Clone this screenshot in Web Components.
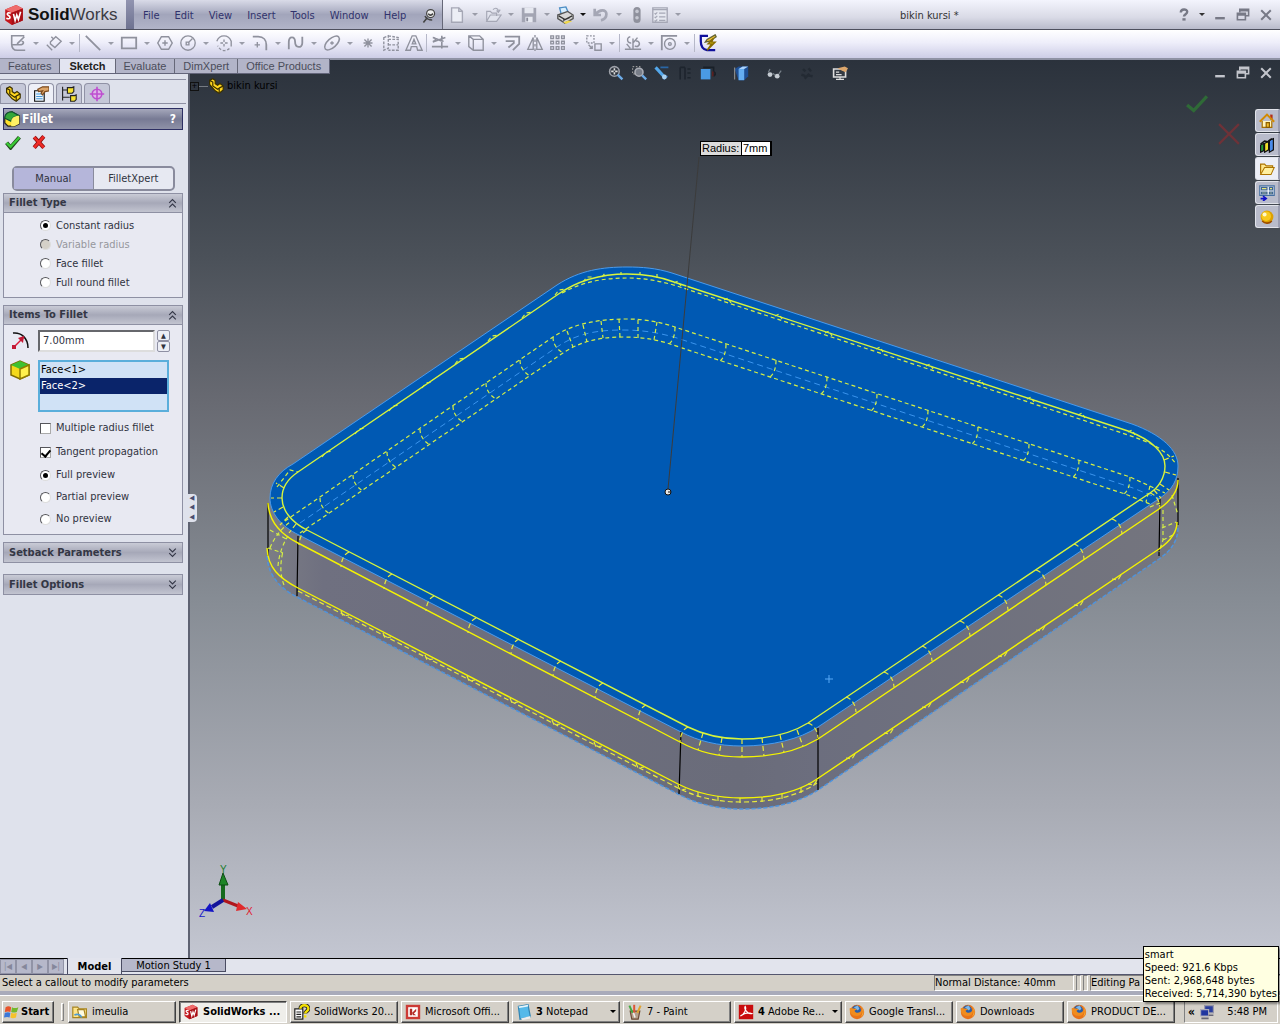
<!DOCTYPE html>
<html lang="en">
<head>
<meta charset="utf-8">
<title>SolidWorks - bikin kursi</title>
<style>
  html, body {
    height: 100%;
    margin: 0;
  }
  body {
    overflow: hidden;
    font: 11px/14px "DejaVu Sans Condensed", "DejaVu Sans", sans-serif;
    color: #000;
  }
</style>
</head>
<body>
<cad-app></cad-app>

<script>
const fox = `<circle cx="10" cy="10" r="9" fill="#e8731a"/><circle cx="9" cy="8" r="6" fill="#2b5fa8"/><path d="M6 4l5-2 2 4-2 2z" fill="#7db8e8"/><path d="M1 5c-1 6 3 10 9 10 4 0 7-3 6-8-1 3-3 4-5 4-2 0-4-1-4-3l3-1c-2-2-5-1-9-2z" fill="#f08c1e"/><path d="M15 3c4 4 4 10 0 13 3-4 3-9 0-13z" fill="#f9c63d"/>`;
const cube = `<path d="M2 5l10-4 6 3v11l-10 4-6-4z" fill="#c4161c"/><path d="M2 5l10-4 6 3-10 4z" fill="#ef6b6b"/><path d="M8 8l10-4v11l-10 4z" fill="#a80f16"/><path d="M7 8.500c-3-1.500-4 1-2 2s2 4-2 2.500M9.500 9l1.500 6 1.500-5 1.500 4 2-7" fill="none" stroke="#fff" stroke-width="1.500"/>`;
const part = `<path d="M2 3l4-2 3 2v4l3 2 3-2 4 3v5l-5 4-5-3-7-8z" fill="#ffd61f" stroke="#3b3000"/><path d="M2 3l4 2v5l6 4 3-2 4-2M14 13v5" fill="none" stroke="#3b3000"/>`;
const restore = `<path d="M6 7V3h11v8h-4M6 4.500h11" fill="none" stroke="currentColor" stroke-width="2"/><path d="M3 8h10v8H3zM3 10h10" fill="none" stroke="currentColor" stroke-width="2"/>`;

// every glyph is drawn on a 20 x 20 grid
const ICONS = {
  cube, part, restore, fox,
  pin: `<circle cx="12" cy="7" r="5" fill="#eee" stroke="#444" stroke-width="1.500"/><path d="M9 7c2 3 4 2 6 0M3 18l5-6M5 10c2 4 5 5 9 5" fill="none" stroke="#444" stroke-width="2"/>`,
  'new': `<path d="M4 2h8l4 4v12H4z" fill="#eceef5" stroke="#a5a7b5"/><path d="M12 2v4h4" fill="none" stroke="#a5a7b5"/>`,
  open: `<path d="M3 17V6h4l2 2h5v3M3 17l4-7h12l-5 7zM10 4c3-3 6-1 6 2m-2-1l2 2 2-3" fill="#e2e4ee" stroke="#a5a7b5" stroke-width="1.300"/>`,
  save: `<path d="M2 2h16v16H2z" fill="#a3a5b3"/><path d="M5 2h10v6H5zM6 12h8v6H6z" fill="#e6e8f0"/><path d="M7 13h2v4H7z" fill="#888a98"/>`,
  print: `<path d="M4 2l7-1 3 7-8 2z" fill="#d8efff" stroke="#4a8cc4"/><path d="M2 10l11-4 6 4v4l-9 5-8-5z" fill="#d8d8d8" stroke="#555"/><path d="M3 11l7 4 8-4M8 16l7-3" fill="none" stroke="#333" stroke-width="1.500"/><path d="M8 18l6-2 4 1-7 3z" fill="#f0d84c"/>`,
  undo: `<path d="M3 3v7h7M4 9c4-5 12-6 12 0 0 3-2 6-6 7" fill="none" stroke="#a5a7b5" stroke-width="3"/>`,
  traffic: `<rect x="6" y="1" width="8" height="18" rx="4" fill="#8f919d"/><circle cx="10" cy="6" r="2" fill="#c6c8d2"/><circle cx="10" cy="13" r="2" fill="#c6c8d2"/>`,
  options: `<path d="M2 2h16v16H2z" fill="#e6e8f0" stroke="#a5a7b5"/><path d="M2 4h16M4 8l1 1 2-2M9 8h7M4 12l1 1 2-2M9 12h7M4 16l1 1 2-2M9 16h7" fill="none" stroke="#a5a7b5" stroke-width="1.300"/>`,
  help: `<path d="M6 7c0-5 8-5 8-1 0 3-4 3-4 6" fill="none" stroke="currentColor" stroke-width="3"/><rect x="8" y="14" width="4" height="3" fill="currentColor"/>`,
  min: `<path d="M4 14h12" stroke="currentColor" stroke-width="3"/>`,
  close: `<path d="M4 4l12 12M16 4L4 16" stroke="currentColor" stroke-width="2.500"/>`,
  sketch: `<path d="M17 2H3v9c0 5 2 7 6 7h9M9 11l8-8M4 12h8c5 0 5-4 2-4" stroke-width="1.800"/>`,
  dimension: `<path d="M6 9l6-6 6 5-7 7-5-4zM2 12l6 6M9 5l-2-2"/>`,
  line: `<path d="M2 2l16 16" stroke-width="2"/>`,
  rect: `<path d="M2 4h16v12H2z" stroke-width="2"/>`,
  polygon: `<path d="M6 3h8l4 7-4 7H6l-4-7zM10 7v6M7 10h6" stroke-width="1.600"/>`,
  circle: `<circle cx="10" cy="10" r="8"/><path d="M10 10l5-5M8 9h3v3H8z"/>`,
  arc: `<path d="M2 8c3-8 13-8 16 0v6"/><path d="M16 16c-4 4-10 3-13-3M10 6v8M6 10h8" stroke-dasharray="3 2"/>`,
  fillet: `<path d="M2 3h6c6 0 9 4 9 9v6" stroke-width="2"/><path d="M7 9v6M4 12h6"/>`,
  spline: `<path d="M2 17V9c0-7 7-7 7 0s8 7 8 1V3" stroke-width="2"/>`,
  ellipse: `<ellipse cx="10" cy="10" rx="10" ry="5" transform="rotate(-42 10 10)" stroke-width="1.700"/><path d="M8 10h4M10 8v4"/>`,
  point: `<path d="M10 5v10M5 10h10M6 6l8 8M14 6l-8 8"/>`,
  grid: `<path d="M2 4l5-2v14l-5 2zM7 6h11v12H7M7 12h11M7 2l11 2v2" stroke-dasharray="3 1.500"/>`,
  letter: `<path d="M1 18L8 2h4l7 16h-5l-1-4H7l-1 4zM8 11l2-5 2 5z"/>`,
  trim: `<path d="M2 4c4 0 4 4 0 4M2 4c3 0 7 4 12 4M2 9l14-5M12 2v14M1 14h18" stroke-width="1.800"/>`,
  convert: `<path d="M2 2h12l4 4v12H7l-5-4zM7 6h11M7 6v12M2 2l5 4" stroke-width="1.500"/>`,
  offset: `<path d="M2 3h16v8l-7 7M3 8h9v2l-6 5" stroke-width="2"/>`,
  mirror: `<path d="M8 4L2 17h6zM12 4l6 13h-6z"/><path d="M10 1v18" stroke-dasharray="3 2"/>`,
  pattern: `<path d="M2 2h3v3H2zM8 2h3v3H8zM14 2h3v3h-3zM2 8h3v3H2zM8 8h3v3H8zM14 8h3v3h-3zM2 14h3v3H2zM8 14h3v3H8zM14 14h3v3h-3z"/>`,
  move: `<path d="M2 2h8v8H2z" stroke-dasharray="2 1.500"/><path d="M11 11h7v7h-7zM4 12l4 4m0-3v3H5"/>`,
  display: `<path d="M1 17h18M10 17V5M7 3a3 3 0 1 0 1 7M15 4l-5 6M13 8a3 3 0 1 1-1 5M3 11l4 5" stroke-width="1.600"/>`,
  quick: `<path d="M1 2h18M2 2v16" stroke-width="2"/><circle cx="11" cy="11" r="6"/><circle cx="11" cy="11" r="1.500"/>`,
  rapid: `<path d="M10 2H2v6c0 6 2 9 7 10h9" stroke="#10109c" stroke-width="2.500"/><path d="M18 1l-9 5-2 3 5-1 7-5z" fill="#f2c12e" stroke="#663"/><path d="M16 5l-6 6h4l-5 7 9-9h-4z" fill="#ffe81f" stroke="#886c00"/>`,
  zoomfit: `<circle cx="8" cy="8" r="6" fill="#30363f" stroke="#9ea1a9" stroke-width="2"/><path d="M8 4v8M4 8h8" stroke="#ddd" stroke-width="2" stroke-dasharray="3 2"/><path d="M12 12l6 6" stroke="#6dace8" stroke-width="3"/>`,
  zoomarea: `<path d="M2 2h9v9H2z" fill="none" stroke="#999" stroke-dasharray="2 2"/><circle cx="10" cy="9" r="5" fill="#777d88" stroke="#aaadb5" stroke-width="2"/><path d="M14 13l5 5" stroke="#6dace8" stroke-width="3"/>`,
  previous: `<path d="M2 3l11 12" stroke="#54a8ec" stroke-width="4"/><path d="M8 3h10M12 18l5-4" stroke="#2966a5" stroke-width="2"/><circle cx="13" cy="15" r="3" fill="#a8d0f0"/>`,
  section: `<path d="M4 3v15M10 3v15M4 3h6M13 5h4M13 10h4M13 16h4" fill="none" stroke="#1d242d" stroke-width="2"/>`,
  orient: `<path d="M1 5h12v13H1z" fill="#4a9ae4"/><path d="M4 3h13v11M17 8l3 3-3 3" fill="none" stroke="#192028" stroke-width="2"/><path d="M16 8v6" stroke="#5b2020" stroke-width="2"/>`,
  style: `<path d="M2 5l5-3h12v12l-5 5H7z" fill="#1f4f93"/><path d="M7 5h7v14H7z" fill="#65aef2"/><path d="M7 5l5-3h7l-5 3z" fill="#aad4ff"/><path d="M2 3v15" stroke="#888"/>`,
  glasses: `<circle cx="5" cy="12" r="3" fill="#c5cbd2"/><circle cx="14" cy="14" r="3" fill="#c5cbd2"/><path d="M3 9l2-4M8 12c1-2 2-1 3 1M16 11l3-4" fill="none" stroke="#79828b"/>`,
  scene: `<path d="M5 5l3 3M12 4l3 4M3 12l5 2M11 13l6 1M7 17l6-6" stroke="#232a33" stroke-width="3"/>`,
  screen: `<path d="M2 5h15v10H2z" fill="#343a42" stroke="#ddd" stroke-width="2"/><path d="M5 18h10M10 15v3M5 9h4M5 12h7" stroke="#ddd" stroke-width="1.500"/><path d="M7 4l9-2 4 2-3 5-5-2z" fill="#dca66c"/>`,
  accept: `<path d="M2 11l5 6L18 4" fill="none" stroke="#24491f" stroke-width="5"/><path d="M2 11l5 5L18 4" fill="none" stroke="#3aca36" stroke-width="3"/>`,
  cancel: `<path d="M4 4l12 13M16 3L4 17" stroke="#8d0e10" stroke-width="5"/><path d="M4 4l12 13M16 3L4 17" stroke="#ef2b26" stroke-width="3"/>`,
  acceptCorner: `<path d="M1 11l6 5L19 3" fill="none" stroke="#2f6a37" stroke-width="3"/>`,
  cancelCorner: `<path d="M1 1l18 18M19 1L1 19" stroke="#6e3238" stroke-width="2"/>`,
  property: `<path d="M2 6h12v13H2z" fill="#eaf5ff" stroke="#111" stroke-width="1.400"/><path d="M4 10h8M4 13h8M4 16h8" stroke="#4797d5" stroke-width="1.300"/><path d="M6 4l6-3h8v5l-5 1-3 4-2-2 2-3-5 1z" fill="#dda569" stroke="#7b4a1f"/>`,
  config: `<path d="M2 1v17M2 5h6M2 14h9" fill="none" stroke="#222" stroke-width="1.400"/><path d="M8 2h6l2-1v6l-2 2H8zM12 12h5l2-1v6l-2 2h-5z" fill="#f8e230" stroke="#222" stroke-width="1.400"/>`,
  target: `<circle cx="10" cy="10" r="6" fill="#dfb4ea" stroke="#bd4fcf" stroke-width="2"/><path d="M10 1v18M1 10h18" stroke="#bd4fcf" stroke-width="2"/>`,
  filletcube: `<path d="M1 9c0-5 4-8 9-8l9 5v10l-6 3H5l-4-4z" fill="#ffe22e" stroke="#222"/><path d="M1 9c0-5 4-8 9-8l9 5c-5 0-9 2-10 7z" fill="#35a83a" stroke="#153"/><path d="M9 13c0-4 4-7 10-7v10l-6 3H9z" fill="#fff265"/>`,
  radius: `<path d="M3 2c8-1 15 5 15 15" fill="none" stroke="#111" stroke-width="1.500"/><path d="M4 16L14 6" stroke="#dc1434" stroke-width="1.500"/><path d="M14 5l-6 2 5 5zM2 14h4v4H2z" fill="#c21a36"/>`,
  facecube: `<path d="M1 5l9-4 9 4v10l-9 4-9-4z" fill="#f4d91b" stroke="#806c00"/><path d="M1 5l9-4 9 4-9 4z" fill="#3fc130"/><path d="M10 9v10l9-4V5z" fill="#fff04e" stroke="#907b00"/>`,
  home: `<path d="M4 10v8h12v-8" fill="#fff5bd" stroke="#a66e00"/><path d="M14 2h3v6h-3z" fill="#b32f18"/><path d="M1 11l9-9 9 9" fill="none" stroke="#d38a00" stroke-width="2.500"/><path d="M9 12h4v6H9z" fill="#f1bd28" stroke="#8b5d00"/>`,
  library: `<path d="M2 10l4-2v9l-4 2z" fill="#219838" stroke="#111"/><path d="M7 8l5-3v11l-5 3z" fill="#f0df2b" stroke="#111"/><path d="M13 4l5-2v14l-5 3z" fill="#4a8bea" stroke="#111"/><path d="M2 9l5-4 4 1 5-4" fill="none" stroke="#111" stroke-width="2"/>`,
  folder: `<path d="M2 16V4h5l2 2h8v3" fill="#ffe78b" stroke="#ad7400"/><path d="M2 17l5-9h12l-4 9z" fill="#fff0a0" stroke="#ad7400" stroke-width="1.300"/>`,
  palette: `<path d="M1 1h18v12H1z" fill="#fff" stroke="#446fa0" stroke-width="1.500"/><path d="M3 3h7v3H3zM13 3h4v3h-4zM3 9h7v2H3zM13 9h4v2h-4z" fill="#e8e67a" stroke="#3e6592"/><path d="M2 17h6m-3-3l4 3-4 3" fill="none" stroke="#1010c8" stroke-width="2"/>`,
  ball: `<circle cx="10" cy="10" r="8" fill="#dda000"/><circle cx="9" cy="9" r="6" fill="#f8c91c"/><circle cx="7" cy="7" r="2.500" fill="#fff9c9"/><path d="M4 15c4 4 9 3 12 0" fill="none" stroke="#9c4d00" stroke-width="2"/>`,
  windows: `<path d="M2 4c3-2 5-1 7 0L8 10c-2-1-4-1-7 0z" fill="#e8542a"/><path d="M10 4c3 2 5 1 8 0l-2 6c-3 1-5 1-7 0z" fill="#74b82a"/><path d="M1 11c3-1 5-1 7 0l-1 6c-2-1-4-1-7 0z" fill="#3c78d8"/><path d="M9 11c2 1 4 1 7 0l-1 6c-3 1-5 1-7 0z" fill="#f6c22c"/>`,
  explorer: `<path d="M1 4h6l2 2h9v11H1z" fill="#ffe58a" stroke="#a88521"/><path d="M7 7h8l2 9H9z" fill="#fffbe0" stroke="#a88521"/><path d="M3 14c3-2 8-1 9 3" fill="none" stroke="#4c9bd4" stroke-width="2"/>`,
  helpdoc: `<path d="M1 6h10v13H1z" fill="#fff" stroke="#222"/><path d="M3 10h6M3 13h6M3 16h6" stroke="#222"/><path d="M8 6c0-6 10-6 10 0 0 3-4 3-4 6" fill="none" stroke="#222" stroke-width="5"/><path d="M8 6c0-6 10-6 10 0 0 3-4 3-4 6M14 14v3" fill="none" stroke="#f4e000" stroke-width="3"/>`,
  powerpoint: `<path d="M1 1h18v18H1z" fill="#cc3a35"/><path d="M4 4h12v12H4z" fill="#fff"/><path d="M6 6h3v8H6zM9 11l5-5v3l-3 3 3 2h-4z" fill="#b42b27"/>`,
  notepad: `<path d="M3 3l12-2 3 15-13 3z" fill="#55b9e9" stroke="#3285b3"/><path d="M3 3l12-2v2L4 5z" fill="#e8f5fb"/><path d="M6 18l12-3v3L8 20z" fill="#eee"/>`,
  paint: `<path d="M4 9h12l-2 10H6z" fill="#b7a08b" stroke="#6b4a35"/><path d="M3 2l4 9" stroke="#42aa41" stroke-width="2.500"/><path d="M9 1v10" stroke="#dd5634" stroke-width="2.500"/><path d="M17 2l-4 9" stroke="#e0a32f" stroke-width="2.500"/><path d="M8 11l2 6" stroke="#eee" stroke-width="2"/>`,
  adobe: `<path d="M1 1h18v18H1z" fill="#c90b0c"/><path d="M3 15c5-2 8-9 6-12-2 3 3 10 8 9-5-2-10 0-14 3z" fill="none" stroke="#fff" stroke-width="1.400"/>`,
  network: `<path d="M7 2h11v9H7z" fill="#2b3f9d" stroke="#99a"/><path d="M2 7h10v8H2z" fill="#2036a0" stroke="#aab"/><path d="M3 18h9M12 14h6" stroke="#667" stroke-width="2"/>`,
  chevUp: `<path d="M4 9l6-6 6 6M4 17l6-6 6 6" fill="none" stroke="#333646" stroke-width="2"/>`,
  chevDown: `<path d="M4 3l6 6 6-6M4 11l6 6 6-6" fill="none" stroke="#333646" stroke-width="2"/>`
};

class BaseElement extends HTMLElement {
  constructor() {
    super();
    this.attachShadow({ mode: "open" });
  }
  connectedCallback() {
    this.shadowRoot.innerHTML = `
      <style>
        * { box-sizing: border-box; }
        button { font: inherit; color: inherit; margin: 0; padding: 0; border: 0; background: none; white-space: nowrap; }
        ${this.styles()}
      </style>
      ${this.markup()}`;
  }
  attr(name) {
    return this.getAttribute(name) || "";
  }
  styles() { return ""; }
  markup() { return "<slot></slot>"; }
}

class CadIcon extends BaseElement {
  styles() {
    return `
      :host { display: block; flex: none; width: var(--icon, 16px); height: var(--icon, 16px); }
      svg { display: block; width: 100%; height: 100%; }
    `;
  }
  markup() {
    // tool glyphs are plain outlines in one grey
    return `<svg viewBox="0 0 20 20" fill="${this.hasAttribute("line") ? "none" : "#000"}" stroke="${this.hasAttribute("line") ? "#8f919d" : "none"}" stroke-width="1.500" aria-hidden="true">${ICONS[this.attr("name")]}</svg>`;
  }
}

class ToolButton extends BaseElement {
  styles() {
    return `
      :host { display: flex; align-items: center; height: 24px; color: #777986; }
      .tool { display: flex; justify-content: center; width: 23px; }
      .drop { display: flex; justify-content: center; width: 13px; }
      .drop::after { content: ""; border: 3px solid transparent; border-top-color: var(--caret, #9a9ca8); border-bottom: 0; }
    `;
  }
  markup() {
    const name = this.attr("name");
    return `
      <button class="tool" aria-label="${name}"><cad-icon name="${name}" ${this.hasAttribute("line") ? "line" : ""}></cad-icon></button>
      ${this.hasAttribute("drop") ? `<button class="drop" aria-label="${name} options"></button>` : ""}
    `;
  }
}

class TitleBar extends BaseElement {
  styles() {
    return `
      :host { display: flex; align-items: stretch; height: 30px; border-bottom: 1px solid #4e505e; background: linear-gradient(#f3f4fd, #d9dae6 60%, #b9bbcb); }
      .brand { display: flex; align-items: center; gap: 3px; width: 126px; padding-left: 3px; background: linear-gradient(#e6e8f2, #c0c2d0); --icon: 22px; font: 17px/22px "Liberation Sans", Arial, sans-serif; color: #3c3c44; }
      .brand b { color: #111; }
      .grip { width: 8px; background: linear-gradient(#9194b0, #6e7290); }
      nav { display: flex; align-items: center; gap: 15px; width: 309px; padding: 2px 0 0 9px; background: linear-gradient(#d9dbe8, #a2a5bb 50%, #b1b4c8); border-right: 1px solid #666878; color: #30336c; }
      .tools, .win { display: flex; align-items: center; }
      .tools { padding-left: 2px; --icon: 18px; }
      h1 { flex: 1; align-self: center; margin: 0; padding: 2px 0 0 216px; font: inherit; color: #333; white-space: nowrap; }
      .win { padding-right: 3px; }
    `;
  }
  markup() {
    return `
      <div class="brand"><cad-icon name="cube"></cad-icon><span><b>Solid</b>Works</span></div>
      <div class="grip"></div>
      <nav>
        ${["File", "Edit", "View", "Insert", "Tools", "Window", "Help"].map(m => `<button>${m}</button>`).join("")}
        <cad-icon name="pin"></cad-icon>
      </nav>
      <div class="tools">
        <tool-button name="new" drop></tool-button>
        <tool-button name="open" drop></tool-button>
        <tool-button name="save" drop></tool-button>
        <tool-button name="print" drop style="--caret:#111"></tool-button>
        <tool-button name="undo" drop></tool-button>
        <tool-button name="traffic"></tool-button>
        <tool-button name="options" drop></tool-button>
      </div>
      <h1>bikin kursi *</h1>
      <div class="win">
        <tool-button name="help" drop style="--caret:#333"></tool-button>
        <tool-button name="min"></tool-button>
        <tool-button name="restore"></tool-button>
        <tool-button name="close"></tool-button>
      </div>`;
  }
}

// a star marks a tool with a drop-down, a bar is a separator
const SKETCH_TOOLS = "sketch* dimension* | line* rect* polygon circle* arc* fillet* spline* ellipse* point grid letter | trim* convert* offset mirror pattern* move* | display* quick* | rapid";

class SketchBar extends BaseElement {
  styles() {
    return `
      :host { display: flex; align-items: center; height: 30px; padding: 0 6px 2px; border-bottom: 2px solid #8f92a4; background: linear-gradient(#fff, #eeeefa 45%, #cdcde6); --icon: 18px; }
      i { width: 1px; height: 18px; margin: 0 1px; background: #b6b8c8; }
    `;
  }
  markup() {
    return SKETCH_TOOLS.split(" ").map(t => t === "|" ? "<i></i>" :
      `<tool-button line name="${t.replace("*", "")}" ${t.endsWith("*") ? "drop" : ""}></tool-button>`).join("");
  }
}

class CommandTabs extends BaseElement {
  styles() {
    return `
      :host { display: flex; height: 15px; background: #b2b4c8; border: solid #63657a; border-width: 0 1px 1px 0; font: 11px/14px "Liberation Sans", Arial, sans-serif; color: #4b4d5a; }
      button { padding: 0 8px; border-right: 1px solid #666878; }
      button:last-child { border: 0; }
      .on { background: #e3e5f1; color: #222; font-weight: bold; padding: 0 9px; }
    `;
  }
  markup() {
    return ["Features", "Sketch", "Evaluate", "DimXpert", "Office Products"]
      .map(t => `<button${t === "Sketch" ? ' class="on"' : ""}>${t}</button>`).join("");
  }
}

class GroupBox extends BaseElement {
  styles() {
    return `
      :host { display: block; border: 1px solid #8e90a3; background: #e8e9f2; }
      h2 { display: flex; justify-content: space-between; align-items: center; height: 19px; margin: 0; padding: 0 4px 0 5px; font: bold 11px/14px "DejaVu Sans Condensed", sans-serif; color: #343745; background: linear-gradient(#c9cbd6, #a6a8b8 50%, #c2c4d0); --icon: 11px; }
      :host([open]) h2 { border-bottom: 1px solid #8e90a3; }
    `;
  }
  markup() {
    return `
      <h2>${this.attr("title")}<button aria-label="Toggle"><cad-icon name="${this.hasAttribute("open") ? "chevUp" : "chevDown"}"></cad-icon></button></h2>
      <slot></slot>`;
  }
}

class FilletPanel extends BaseElement {
  styles() {
    return `
      :host { display: block; width: 190px; padding: 19px 5px 0 3px; border-right: 2px solid #5e6272; background: #dfe2ec; color: #30333f; white-space: nowrap; }
      .tabs { display: flex; gap: 2px; margin: 0 -3px 4px; padding-top: 3px; border: solid #8e90a3; border-width: 1px 0; }
      .tabs button { display: flex; justify-content: center; align-items: center; width: 26px; height: 20px; border: 1px solid #9092a5; border-bottom: 0; border-radius: 4px 4px 0 0; background: #c5c8d8; }
      .tabs .on { background: #eef0f8; }
      .head { display: flex; align-items: center; gap: 2px; height: 22px; padding: 0 6px 0 0; color: #fff; background: linear-gradient(#a5a7bb, #777a94 50%, #8f92a8); border: 1px solid #2d2f63; font: bold 12px/18px "DejaVu Sans Condensed", sans-serif; }
      .head h1 { flex: 1; margin: 0; font: inherit; }
      .confirm { display: flex; gap: 10px; padding: 4px 2px 16px; }
      .mode { display: grid; grid-template-columns: 1fr 1fr; height: 25px; margin: 0 8px 2px 9px; border: 2px solid #898b9d; border-radius: 5px; background: #e7e9f2; }
      .mode .on { background: #b5b6da; border-right: 1px solid #898b9d; }
      group-box { margin-bottom: 7px; }
      group-box:not([open]) { margin-bottom: 11px; }
      label { display: flex; align-items: center; gap: 5px; padding-left: 36px; }
      .types label { height: 19px; }
      .types { padding: 3px 0 5px; }
      .off { color: #96979d; }
      input { margin: 0; font: inherit; color: inherit; }
      [type=radio], [type=checkbox] { appearance: none; display: grid; place-items: center; flex: none; width: 11px; height: 11px; border: 1px solid; border-color: #55555a #ddd #ddd #55555a; background: #fff; }
      [type=radio] { border-radius: 50%; }
      [type=radio]:checked::after { content: ""; width: 5px; height: 5px; border-radius: 50%; background: #000; }
      [type=checkbox] { border-color: #55555a #aaa #aaa #55555a; }
      [type=checkbox]:checked::after { content: ""; width: 4px; height: 7px; border: solid #000; border-width: 0 2px 2px 0; transform: rotate(40deg); }
      [type=radio]:disabled { background: #d4d0c8; }
      .size { display: flex; align-items: center; gap: 2px; padding: 5px 12px 8px 6px; }
      .size cad-icon, .faces cad-icon { --icon: 20px; margin-right: 6px; }
      .size input { flex: 1; min-width: 0; height: 22px; padding: 0 3px 2px; border: 2px solid; border-color: #66676c #ddd #ddd #66676c; background: #fff; }
      .spin { display: flex; flex-direction: column; width: 13px; }
      .spin button { height: 11px; font-size: 7px; line-height: 8px; border: 1px solid #8e90a3; border-radius: 2px; background: #eceef5; }
      .faces { display: flex; align-items: flex-start; gap: 2px; padding: 0 13px 4px 6px; }
      select { flex: 1; min-width: 0; height: 52px; padding: 0; overflow: hidden; border: 2px solid #5aaedb; border-radius: 0; outline: 0; background: #d0e2f6; font: inherit; color: #000; }
      option { min-height: 16px; padding: 1px 1px; line-height: 14px; }
      option:checked { background: #0a246a linear-gradient(#0a246a, #0a246a); color: #fff; }
      .checks label { height: 24px; }
      .previews label { height: 22px; }
      .previews { padding-bottom: 4px; }
    `;
  }
  markup() {
    return `
      <div class="tabs">
        <button aria-label="Feature tree"><cad-icon name="part"></cad-icon></button>
        <button class="on" aria-label="Properties"><cad-icon name="property"></cad-icon></button>
        <button aria-label="Configurations"><cad-icon name="config"></cad-icon></button>
        <button aria-label="DimXpert"><cad-icon name="target"></cad-icon></button>
      </div>
      <div class="head"><cad-icon name="filletcube"></cad-icon><h1>Fillet</h1><button aria-label="Help">?</button></div>
      <div class="confirm">
        <button aria-label="OK"><cad-icon name="accept"></cad-icon></button>
        <button aria-label="Cancel"><cad-icon name="cancel"></cad-icon></button>
      </div>
      <div class="mode"><button class="on">Manual</button><button>FilletXpert</button></div>
      <group-box title="Fillet Type" open>
        <div class="types">
          <label><input type="radio" name="type" checked>Constant radius</label>
          <label class="off"><input type="radio" name="type" disabled>Variable radius</label>
          <label><input type="radio" name="type">Face fillet</label>
          <label><input type="radio" name="type">Full round fillet</label>
        </div>
      </group-box>
      <group-box title="Items To Fillet" open>
        <div class="size">
          <cad-icon name="radius"></cad-icon>
          <input type="text" value="7.00mm" aria-label="Radius">
          <div class="spin"><button aria-label="Up">▲</button><button aria-label="Down">▼</button></div>
        </div>
        <div class="faces">
          <cad-icon name="facecube"></cad-icon>
          <select multiple size="3" aria-label="Faces"><option>Face&lt;1&gt;</option><option selected>Face&lt;2&gt;</option></select>
        </div>
        <div class="checks">
          <label><input type="checkbox">Multiple radius fillet</label>
          <label><input type="checkbox" checked>Tangent propagation</label>
        </div>
        <div class="previews">
          <label><input type="radio" name="preview" checked>Full preview</label>
          <label><input type="radio" name="preview">Partial preview</label>
          <label><input type="radio" name="preview">No preview</label>
        </div>
      </group-box>
      <group-box title="Setback Parameters"></group-box>
      <group-box title="Fillet Options"></group-box>`;
  }
}

// count + 1 strokes, evenly spaced from (x1, y1) to (x2, y2)
function ticks(x1, y1, x2, y2, count, stroke) {
  let d = "";
  for (let i = 0; i <= count; i++) {
    const x = Math.round(x1 + (x2 - x1) * i / count);
    const y = Math.round(y1 + (y2 - y1) * i / count);
    d += `M${x} ${y}${stroke}`;
  }
  return d;
}

class ModelView extends BaseElement {
  styles() {
    return `
      :host { display: block; position: relative; flex: 1; min-width: 0; overflow: hidden; background: linear-gradient(#2b323c, #4b5159 22%, #686a72 38%, #868c94 60%, #a8abb4 83%, #c3c6d1); }
      svg.scene { position: absolute; inset: 0; width: 100%; height: 100%; }
      .callout { display: flex; width: 72px; height: 15px; border: 1px solid #000; border-right-width: 2px; background: #dcdcdc; color: #000; font: 11px/13px "Liberation Sans", Arial, sans-serif; }
      .callout label { flex: 1; padding-left: 1px; }
      .callout input { width: 29px; margin: 0; padding: 0 1px; border: 0; border-left: 1px solid #000; background: #fff; font: inherit; }
      .tree { position: absolute; left: 0; top: 18px; display: flex; align-items: center; color: #000; }
      .tree i { width: 9px; height: 9px; border: 1px solid #111; font: 9px/7px "Liberation Sans", sans-serif; text-align: center; }
      .tree i::after { content: "+"; }
      .tree hr { width: 9px; margin: 0; border: 0; border-top: 1px solid #767b82; }
      .tree span { padding-left: 3px; }
      .view { position: absolute; top: 1px; left: 0; right: 0; display: flex; justify-content: center; padding-right: 14px; }
      .view .wide { margin-left: 10px; }
      .doc { position: absolute; top: 1px; right: 3px; display: flex; }
      .doc tool-button { color: #c3c5cc; }
      .corner { position: absolute; top: 33px; right: 40px; display: grid; width: 54px; height: 52px; --icon: 22px; }
      .corner :last-child { justify-self: end; align-self: end; }
      .pane { position: absolute; top: 49px; right: 0; width: 25px; display: grid; gap: 1px; }
      .pane button { display: grid; place-items: center; height: 23px; border: 1px solid #e1e3ea; border-right: 2px solid #9a9db0; border-radius: 3px 0 0 3px; background: #b9bccb; }
      .pane .on { background: #eceef6; }
    `;
  }
  markup() {
    const leftHook = "l4 -5l7 -1";
    const rightHook = "l4 -2l3 5";
    return `
      <svg class="scene" viewBox="190 60 1090 898" fill="none">
        <defs>
          <linearGradient id="side" x1="268" x2="1178" y1="0" y2="0" gradientUnits="userSpaceOnUse">
            <stop offset="0" stop-color="#7b7d85"/><stop offset=".06" stop-color="#6f7080"/>
            <stop offset=".52" stop-color="#6a6c7a"/><stop offset=".6" stop-color="#6c6e7e"/><stop offset="1" stop-color="#74757e"/>
          </linearGradient>
        </defs>
        <path d="M268 500V556C268 574 278 587 297 597L678 794C697 804 718 809 742 809C772 809 798 803 818 790L1159 559C1172 550 1178 540 1178 527V466Z" fill="url(#side)"/>
        <path d="M267 556C268 574 278 587 297 597L678 794C697 804 718 809 742 809C772 809 798 803 818 790L1159 559C1172 550 1178 540 1178 527" stroke="#4f93dc" stroke-width="1.500" stroke-dasharray="4 2"/>
        <path d="M557 285C580 270 603 267 627 267C642 267 656 268 672 273L1132 424C1162 435 1178 450 1178 466C1178 480 1172 490 1160 498L818 727C800 739 772 746 742 746C718 746 698 741 681 732L299 535C280 526 270 512 270 498C270 484 278 472 293 464Z" fill="#0059b3" stroke="#4a9bec"/>

        <path d="M268 503V556M298 536L297 596M681 732L679 794M818 728V790M1160 499L1159 556M1178 478V525" stroke="#000" stroke-width="1.200"/>

        <path d="M300 523L557 347C576 334 596 330 622 330C644 330 660 333 677 338L1133 488L1160 499" stroke="#3b94ed" stroke-dasharray="6 4"/>
        <g stroke="#d5ef45" stroke-width="1.200" stroke-dasharray="4 3">
          <path d="M285 521L553 337C572 324 598 319 627 319C644 319 660 322 675 327L1130 477L1165 493"/>
          <path d="M300 533L563 353C578 343 596 337 623 337C644 337 658 340 670 344L1125 494L1150 504"/>
          <path d="M562 293C584 281 606 278 627 278C645 278 660 281 677 286L1128 435C1152 443 1166 450 1176 464"/>
          <path d="${ticks(553, 337, 320, 498, 7, "q0 10 10 16")}"/>
          <path d="${ticks(675, 327, 1130, 477, 9, "q0 12 -6 17")}"/>
          <path d="M567 331l6 16M583 325l4 17M601 321l2 17M619 319l1 18M638 320l0 18M657 322l-3 18M1150 486l-4 16"/>
          <path d="${ticks(555, 295, 322, 457, 7, leftHook)}${ticks(674, 283, 1128, 432, 9, rightHook)}"/>
          <path d="M583 282l4 -5h6M602 277l3 -4M621 275v-3M640 275v-3M657 278v-4M277 487L290 470L298 472"/>
          <path d="M270 548C274 538 280 530 290 522M278 566C279 554 283 544 288 536M270 530L288 540M268 548L283 553M284 585C279 572 281 560 283 551"/>
          <path d="M1163 510V540L1159 552M1172 495L1178 515M1162 528L1176 522M1163 540L1175 534M1150 507L1160 503"/>
        </g>

        <g stroke="#f4f400" stroke-width="1.400">
          <path stroke="#d7f43c" d="M557 295C578 280 602 274 627 274C644 274 658 276 674 282L1128 431C1152 440 1165 453 1165 466C1165 478 1158 488 1150 493L808 723C792 733 768 739 742 739C722 739 704 735 688 727L307 530C291 522 282 510 282 498C282 487 289 478 298 472Z"/>
          <path d="M268 503C269 522 280 534 298 543L680 742C698 752 718 757 742 757C772 757 798 751 818 739L1159 509C1172 500 1178 491 1178 480"/>
          <path d="M267 548C268 568 279 578 298 588L678 784C698 794 718 798 742 798C772 798 798 792 817 779L1159 549C1172 540 1177 532 1177 522"/>
        </g>
        <g stroke="#e8ea3c" stroke-width="1.200" stroke-dasharray="5 3">
          <path d="${ticks(307, 530, 688, 727, 9, "q-7 3 -8 15")}${ticks(808, 723, 1150, 493, 9, "q9 3 10 15")}"/>
          <path d="M703 733l-5 17M722 738l-3 17M742 739v18M762 738l2 18M780 735l4 17M797 730l6 16"/>
          <path d="M284 488l-8 -5M282 498h-11M283 507l-9 5M288 517l-8 8M296 524l-7 9M1164 460l10 -4M1165 472l11 3M1160 484l9 6M1154 490l7 8"/>
          <path d="M298 591L678 788C698 798 718 802 742 802C772 802 798 796 817 783"/>
          <path d="${ticks(341, 611, 678, 785, 8, "l2 5l6 -1")}${ticks(817, 780, 1121, 575, 8, "l-3 5l-6 -1")}"/>
          <path d="M698 792v6M718 796v6M740 798v7M762 797v6M782 794v6M801 788v6"/>
        </g>

        <path d="M829 675v8M825 679h8" stroke="#58aaf6"/>
        <path d="M699 157L668 489" stroke="#3c3c3c"/>
        <circle cx="668" cy="492" r="3" fill="#e8e8e8" stroke="#111"/><path d="M668 492h3" stroke="#111"/>
        <foreignObject x="700" y="141" width="74" height="17">
          <div class="callout"><label for="callout">Radius:</label><input id="callout" value="7mm"></div>
        </foreignObject>

        <path d="M223 900V884" stroke="#156a1c" stroke-width="4"/><path d="M219 885L223 873L228 885Z" fill="#1d8526" stroke="#0d4d14"/>
        <path d="M223 900L238 906" stroke="#b0161c" stroke-width="3"/><path d="M238 902L247 909L236 911Z" fill="#e02a2c"/>
        <path d="M223 900L212 907" stroke="#14149a" stroke-width="4"/><path d="M210 903L204 911L214 912Z" fill="#1414c4"/>
        <g font-family="Liberation Sans, sans-serif" font-size="10">
          <text x="220" y="873" fill="#1d7d2c">Y</text><text x="246" y="915" fill="#e02030">X</text><text x="199" y="917" fill="#1818c8">Z</text>
        </g>
      </svg>
      <div class="tree"><i></i><hr><cad-icon name="part"></cad-icon><span>bikin kursi</span></div>
      <div class="view">
        ${["zoomfit", "zoomarea", "previous", "section", "orient"].map(n => `<tool-button name="${n}"></tool-button>`).join("")}
        ${["style", "glasses", "scene", "screen"].map(n => `<tool-button class="wide" name="${n}"></tool-button>`).join("")}
      </div>
      <div class="doc"><tool-button name="min"></tool-button><tool-button name="restore"></tool-button><tool-button name="close"></tool-button></div>
      <div class="corner"><cad-icon name="acceptCorner"></cad-icon><cad-icon name="cancelCorner"></cad-icon></div>
      <div class="pane">
        ${["home", "library", "folder", "palette", "ball"].map(n => `<button aria-label="${n}"${n === "folder" ? ' class="on"' : ""}><cad-icon name="${n}"></cad-icon></button>`).join("")}
      </div>`;
  }
}

class DocTabs extends BaseElement {
  styles() {
    return `
      :host { display: flex; height: 16px; border-top: 1px solid #000; background: #e2e4ed; line-height: 13px; }
      button { border-right: 1px solid #4a4c62; }
      .nav { width: 16px; height: 15px; border: 1px solid #9193a6; background: #b6b8ca; color: #85879b; font-size: 8px; }
      .on { width: 55px; margin: -1px 0 0 3px; font-weight: bold; background: #e2e4ed; border-left: 1px solid #4a4c62; }
      .study { width: 104px; height: 13px; background: #b6b8ca; border-bottom: 1px solid #4a4c62; }
    `;
  }
  markup() {
    return `
      <button class="nav" aria-label="First">|◀</button><button class="nav" aria-label="Previous">◀</button>
      <button class="nav" aria-label="Next">▶</button><button class="nav" aria-label="Last">▶|</button>
      <button class="on">Model</button><button class="study">Motion Study 1</button>`;
  }
}

class StatusBar extends BaseElement {
  styles() {
    return `
      :host { display: flex; gap: 2px; height: 21px; padding-left: 2px; border-top: 1px solid #54566e; border-bottom: 4px solid #a9abba; background: #d4d0c8; white-space: nowrap; line-height: 16px; }
      span { height: 16px; }
      .message { flex: 1; }
      .cell { border: 1px solid; border-color: #808080 #fff #fff #808080; line-height: 14px; }
      .dist { width: 140px; }
      .gap { width: 5px; }
      .edit { width: 190px; }
    `;
  }
  markup() {
    return `<span class="message">Select a callout to modify parameters</span><span class="cell dist">Normal Distance: 40mm</span>
      <span class="cell gap"></span><span class="cell gap"></span><span class="cell edit">Editing Pa</span>`;
  }
}

class TaskButton extends BaseElement {
  styles() {
    return `
      :host { display: block; flex: 1; min-width: 0; }
      button { display: flex; align-items: center; gap: 4px; width: 100%; height: 22px; padding: 0 3px; border: 1px solid; border-color: #fff #404040 #404040 #fff; box-shadow: inset -1px -1px #808080; background: #d4d0c8; text-align: left; }
      span { flex: 1; overflow: hidden; }
      :host(.start) button { gap: 1px; padding: 0 1px; }
      :host([active]) button { background: #efeeea; border-color: #404040 #fff #fff #404040; box-shadow: inset 1px 1px #808080; font-weight: bold; }
      .drop { border: 3px solid transparent; border-top-color: #000; border-bottom: 0; }
    `;
  }
  markup() {
    return `<button><cad-icon name="${this.attr("icon")}"></cad-icon><span><slot></slot></span>${this.hasAttribute("drop") ? '<i class="drop"></i>' : ""}</button>`;
  }
}

class TaskBar extends BaseElement {
  styles() {
    return `
      :host { display: flex; align-items: center; gap: 3px; height: 29px; padding: 3px 2px 0 2px; border-top: 1px solid #fff; background: #d4d0c8; white-space: nowrap; }
      .start { flex: none; width: 52px; font-weight: bold; }
      .sep { width: 3px; height: 18px; margin: 0 1px 0 4px; border: 1px solid; border-color: #fff #808080 #808080 #fff; }
      .tray { display: flex; align-items: center; gap: 4px; width: 94px; height: 22px; margin-left: 6px; padding: 0 10px 0 3px; border: 1px solid; border-color: #808080 #fff #fff #808080; }
      .tray b { font-size: 12px; }
      time { margin-left: auto; }
    `;
  }
  markup() {
    return `
      <task-button class="start" icon="windows">Start</task-button>
      <div class="sep"></div>
      <task-button icon="explorer">imeulia</task-button>
      <task-button icon="cube" active>SolidWorks ...</task-button>
      <task-button icon="helpdoc">SolidWorks 20...</task-button>
      <task-button icon="powerpoint">Microsoft Offi...</task-button>
      <task-button icon="notepad" drop><b>3</b> Notepad</task-button>
      <task-button icon="paint">7 - Paint</task-button>
      <task-button icon="adobe" drop><b>4</b> Adobe Re...</task-button>
      <task-button icon="fox">Google Transl...</task-button>
      <task-button icon="fox">Downloads</task-button>
      <task-button icon="fox">PRODUCT DE...</task-button>
      <div class="tray"><b>«</b><cad-icon name="network"></cad-icon><time>5:48 PM</time></div>`;
  }
}

class NetTip extends BaseElement {
  styles() {
    return `
      :host { display: block; padding: 1px 1px; border: 1px solid #000; background: #ffffe1; box-shadow: 2px 2px 2px rgba(0, 0, 0, .4); line-height: 13px; white-space: nowrap; }
    `;
  }
}

class CadApp extends BaseElement {
  styles() {
    return `
      :host { display: flex; flex-direction: column; height: 100vh; position: relative; }
      main { display: flex; flex: 1; min-height: 0; position: relative; }
      command-tabs { position: absolute; left: 0; top: -1px; z-index: 1; }
      .handle { position: absolute; left: 187px; top: 434px; display: grid; width: 10px; height: 28px; border-radius: 0 4px 4px 0; background: #dfe2ec; color: #4a4d70; font-size: 7px; line-height: 9px; }
      net-tip { position: absolute; right: 1px; bottom: 22px; }
    `;
  }
  markup() {
    return `
      <title-bar></title-bar>
      <sketch-bar></sketch-bar>
      <main>
        <command-tabs></command-tabs>
        <fillet-panel></fillet-panel>
        <model-view></model-view>
        <button class="handle" aria-label="Collapse panel"><i>◀</i><i>◀</i><i>◀</i></button>
      </main>
      <doc-tabs></doc-tabs>
      <status-bar></status-bar>
      <task-bar></task-bar>
      <net-tip>smart<br>Speed: 921.6 Kbps<br>Sent: 2,968,648 bytes<br>Received: 5,714,390 bytes</net-tip>`;
  }
}

customElements.define("cad-icon", CadIcon);
customElements.define("tool-button", ToolButton);
customElements.define("title-bar", TitleBar);
customElements.define("sketch-bar", SketchBar);
customElements.define("command-tabs", CommandTabs);
customElements.define("group-box", GroupBox);
customElements.define("fillet-panel", FilletPanel);
customElements.define("model-view", ModelView);
customElements.define("doc-tabs", DocTabs);
customElements.define("status-bar", StatusBar);
customElements.define("task-button", TaskButton);
customElements.define("task-bar", TaskBar);
customElements.define("net-tip", NetTip);
customElements.define("cad-app", CadApp);
</script>
</body>
</html>
